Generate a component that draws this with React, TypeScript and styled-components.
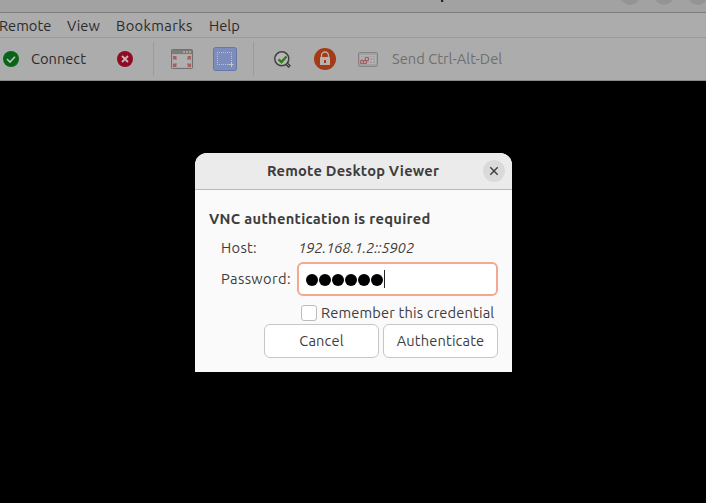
import React from "react";
import styled, { createGlobalStyle } from "styled-components";

const Global = createGlobalStyle`
  *, *::before, *::after { box-sizing: border-box; }
  html, body { margin: 0; background: #000; overflow: hidden; }
  body { font-family: Ubuntu, "Noto Sans", sans-serif; font-size: 14.667px; color: #3d3d3d; }
  svg { display: block; }
`;

const Window = styled.div`
  width: 706px;
  height: 503px;
  display: flex;
  flex-direction: column;
  overflow: hidden;
  background: #000;
`;

const TitleBar = styled.header`
  height: 13px;
  flex: none;
  display: flex;
  align-items: flex-end;
  overflow: hidden;
  background: #a2a2a2;
  border-bottom: 1px solid #7d7d7d;
`;

const TitleTail = styled.div`
  width: 3px;
  height: 2px;
  flex: none;
  margin: 0 176px 10px 441px;
  background: linear-gradient(90deg, #222 66%, #85898e 66%);
`;

const WindowButtons = styled.div`
  display: flex;
  flex: none;
  gap: 14px;
`;

const WindowButton = styled.div`
  width: 20px;
  height: 20px;
  flex: none;
  margin-bottom: 7px;
  border-radius: 50%;
  background: #949494;
`;

const MenuBar = styled.nav`
  height: 25px;
  flex: none;
  display: flex;
  align-items: center;
  padding-top: 1px;
  background: #acacac;
  border-bottom: 1px solid #9b9b9b;
`;

const Label = styled.span<{ $width?: number; $track?: number }>`
  display: block;
  flex: none;
  width: ${(p) => (p.$width ? `${p.$width}px` : "auto")};
  letter-spacing: ${(p) => p.$track ?? 0}px;
  line-height: 20px;
  white-space: nowrap;
`;

const MenuLabel = styled(Label)`
  color: #2b2b2b;

  &:first-child {
    margin-left: -1px;
  }
`;

const ToolBar = styled.div`
  height: 43px;
  flex: none;
  display: flex;
  align-items: center;
  background: #acacac;
  border-bottom: 1px solid #8a8a8a;
`;

const ToolSlot = styled.div<{ $width: number; $indent?: number }>`
  width: ${(p) => p.$width}px;
  padding-left: ${(p) => p.$indent ?? 0}px;
  flex: none;
`;

const ToolLabel = styled(Label)<{ $muted?: boolean }>`
  color: ${(p) => (p.$muted ? "#6f6f6f" : "#2b2b2b")};
`;

const Divider = styled.div`
  width: 1px;
  height: 34px;
  flex: none;
  background: #9b9b9b;
`;

const Viewport = styled.main`
  flex: 1;
  padding: 72px 0 0 195px;
`;

const Dialog = styled.section`
  width: 317px;
  height: 219px;
  overflow: hidden;
  border-radius: 12px 12px 0 0;
  background: #fafafa;
`;

const DialogHeader = styled.header`
  height: 37px;
  display: flex;
  align-items: center;
  padding-left: 72px;
  background: #ebebeb;
  border-bottom: 1px solid #b8b8b8;
`;

const DialogTitle = styled(Label)`
  font-weight: 700;
`;

const CloseButton = styled.button`
  width: 22px;
  height: 22px;
  padding: 0;
  border: 0;
  border-radius: 50%;
  background: #dadada;
`;

const Heading = styled(Label)`
  margin: 19px 0 0 14px;
  font-weight: 700;
`;

const FormGrid = styled.div`
  display: grid;
  grid-template-columns: 76px 201px;
  grid-template-rows: 28px 34px;
  align-items: center;
  margin-top: 5px;
  padding-left: 26px;
`;

const HostValue = styled(Label)`
  padding-left: 1px;
  font-style: italic;
`;

const PasswordField = styled.div`
  height: 34px;
  display: flex;
  align-items: center;
  padding-left: 7px;
  border: 2px solid #f3a88f;
  border-radius: 6px;
  background: #fff;
`;

const Bullet = styled.span`
  width: 12px;
  height: 12px;
  margin: 1px 1px 0 0;
  border-radius: 50%;
  background: #000;
`;

const Caret = styled.span`
  width: 1px;
  height: 18px;
  background: #222;
`;

const RememberRow = styled.label`
  display: flex;
  align-items: center;
  height: 20px;
  margin: 7px 0 0 106px;
`;

const CheckBox = styled.span`
  width: 16px;
  height: 16px;
  margin-right: 4px;
  border: 1px solid #bcbcbc;
  border-radius: 3px;
  background: #fff;
`;

const Actions = styled.div`
  display: flex;
  gap: 4px;
  margin: 1px 0 0 69px;
`;

const ActionButton = styled.button`
  width: 115px;
  height: 34px;
  display: flex;
  align-items: center;
  justify-content: center;
  padding: 0;
  border: 1px solid #c6c6c6;
  border-radius: 6px;
  background: #fff;
  color: #3d3d3d;
  font: inherit;
`;

const ConnectIcon = () => (
  <svg width="16" height="16" viewBox="0 0 16 16">
    <circle cx="8" cy="8" r="8" fill="#09641a" />
    <path d="M4 8l3 3 5-5.3" fill="none" stroke="#b9c9b9" strokeWidth="1.6" />
  </svg>
);

const DisconnectIcon = () => (
  <svg width="16" height="16" viewBox="0 0 16 16">
    <circle cx="8" cy="8" r="8" fill="#900b21" />
    <path d="M5 5l6 6M11 5l-6 6" stroke="#c7b6b9" strokeWidth="1.9" />
  </svg>
);

const FullscreenIcon = () => (
  <svg width="22" height="20" viewBox="0 0 22 20">
    <rect x=".5" y=".5" width="21" height="19" rx=".8" fill="#a9a9a9" stroke="#707070" />
    <path d="M1 1h20v4H1z" fill="#7c7c7c" />
    <path d="M12 2h2v2h-2zM15 2h2v2h-2zM18 2h2v2h-2z" fill="#b0a17c" />
    <path d="M2 6h18v12H2z" fill="#b0b0b0" />
    <path
      d="M2 7h4L5 8l1 2-1 1-2-1-1 1zM20 7h-4l1 1-1 2 1 1 2-1 1 1zM2 18h4l-1-1 1-2-1-1-2 1-1-1zM20 18h-4l1-1-1-2 1-1 2 1 1-1z"
      fill="#a66060"
    />
  </svg>
);

const ScalingIcon = () => (
  <svg width="24" height="24" viewBox="0 0 24 24">
    <rect x=".5" y=".5" width="23" height="23" rx="2" fill="#7d8dbb" stroke="#6677a8" />
    <path d="M4 5.5h15M4 17.5h12M4.5 5v13M18.5 5v10" stroke="#c0c2c6" strokeDasharray="1 1" />
    <path d="M15.5 17.5h5M18.5 15v5" stroke="#c6c8cc" />
  </svg>
);

const MagnifierIcon = () => (
  <svg width="17" height="17" viewBox="0 0 17 17">
    <path d="M12 12l3.8 3.8" stroke="#3b3b3b" strokeWidth="3.2" />
    <path d="M12.5 12.5l2.7 2.7" stroke="#989898" strokeWidth="1" />
    <circle cx="7.8" cy="7.8" r="7" fill="#b6b6b6" stroke="#414141" strokeWidth="1.5" />
    <path d="M4.5 8.3l3 2.7 5-5.5" fill="none" stroke="#2f7d18" strokeWidth="2.4" />
  </svg>
);

const LockIcon = () => (
  <svg width="22" height="22" viewBox="0 0 22 22">
    <circle cx="11" cy="11" r="11" fill="#a43b16" />
    <path d="M7.5 10V7.5a3.5 3.5 0 0 1 7 0V10" fill="none" stroke="#b8b1ae" strokeWidth="1.3" />
    <rect x="6" y="9" width="10" height="8" rx=".6" fill="#b8b1ae" />
    <path d="M10 12h2v3h-2z" fill="#a43b16" />
  </svg>
);

const KeyboardIcon = () => (
  <svg width="20" height="15" viewBox="0 0 20 15">
    <rect x=".5" y=".5" width="19" height="14" rx="1.3" fill="#a1a1a1" stroke="#858585" />
    <path
      d="M2.5 3.5h15v8h-15zM2.5 5.5h15M2.5 8.5h15M5.5 3.5v5M8.5 3.5v5M11.5 3.5v8M14.5 3.5v8"
      fill="none"
      stroke="#b2b2b2"
    />
    <path d="M7.5 5.5h3v3h-3zM5.5 8.500h3v3h-3zM2.500 8.500h3v3h-3z" fill="none" stroke="#ad5860" />
  </svg>
);

const CloseIcon = () => (
  <svg width="22" height="22" viewBox="0 0 22 22">
    <path d="M7.3 7.3l7.4 7.4M14.7 7.3l-7.4 7.4" stroke="#3d3d3d" strokeWidth="1.4" />
  </svg>
);

const bullets = Array.from({ length: 6 }, (_, i) => i);

export default function App() {
  return (
    <Window>
      <Global />
      <TitleBar>
        <TitleTail />
        <WindowButtons>
          <WindowButton />
          <WindowButton />
          <WindowButton />
        </WindowButtons>
      </TitleBar>
      <MenuBar>
        <MenuLabel $width={68}>Remote</MenuLabel>
        <MenuLabel $width={49}>View</MenuLabel>
        <MenuLabel $width={93} $track={0.37}>Bookmarks</MenuLabel>
        <MenuLabel>Help</MenuLabel>
      </MenuBar>
      <ToolBar>
        <ToolSlot $width={31} $indent={3}><ConnectIcon /></ToolSlot>
        <ToolLabel $width={86}>Connect</ToolLabel>
        <ToolSlot $width={36}><DisconnectIcon /></ToolSlot>
        <Divider />
        <ToolSlot $width={59} $indent={17}><FullscreenIcon /></ToolSlot>
        <ToolSlot $width={40}><ScalingIcon /></ToolSlot>
        <Divider />
        <ToolSlot $width={60} $indent={20}><MagnifierIcon /></ToolSlot>
        <ToolSlot $width={44}><LockIcon /></ToolSlot>
        <ToolSlot $width={34}><KeyboardIcon /></ToolSlot>
        <ToolLabel $muted $track={0.03}>Send Ctrl-Alt-Del</ToolLabel>
      </ToolBar>
      <Viewport>
        <Dialog>
          <DialogHeader>
            <DialogTitle $width={216} $track={0.22}>Remote Desktop Viewer</DialogTitle>
            <CloseButton aria-label="Close"><CloseIcon /></CloseButton>
          </DialogHeader>
          <Heading $track={0.31}>VNC authentication is required</Heading>
          <FormGrid>
            <Label $track={0.3}>Host:</Label>
            <HostValue $track={-0.1}>192.168.1.2::5902</HostValue>
            <Label $track={0.37}>Password:</Label>
            <PasswordField>
              {bullets.map((i) => <Bullet key={i} />)}
              <Caret />
            </PasswordField>
          </FormGrid>
          <RememberRow>
            <CheckBox />
            <Label $track={0.15}>Remember this credential</Label>
          </RememberRow>
          <Actions>
            <ActionButton><Label $track={0.15}>Cancel</Label></ActionButton>
            <ActionButton><Label $track={0.14}>Authenticate</Label></ActionButton>
          </Actions>
        </Dialog>
      </Viewport>
    </Window>
  );
}
